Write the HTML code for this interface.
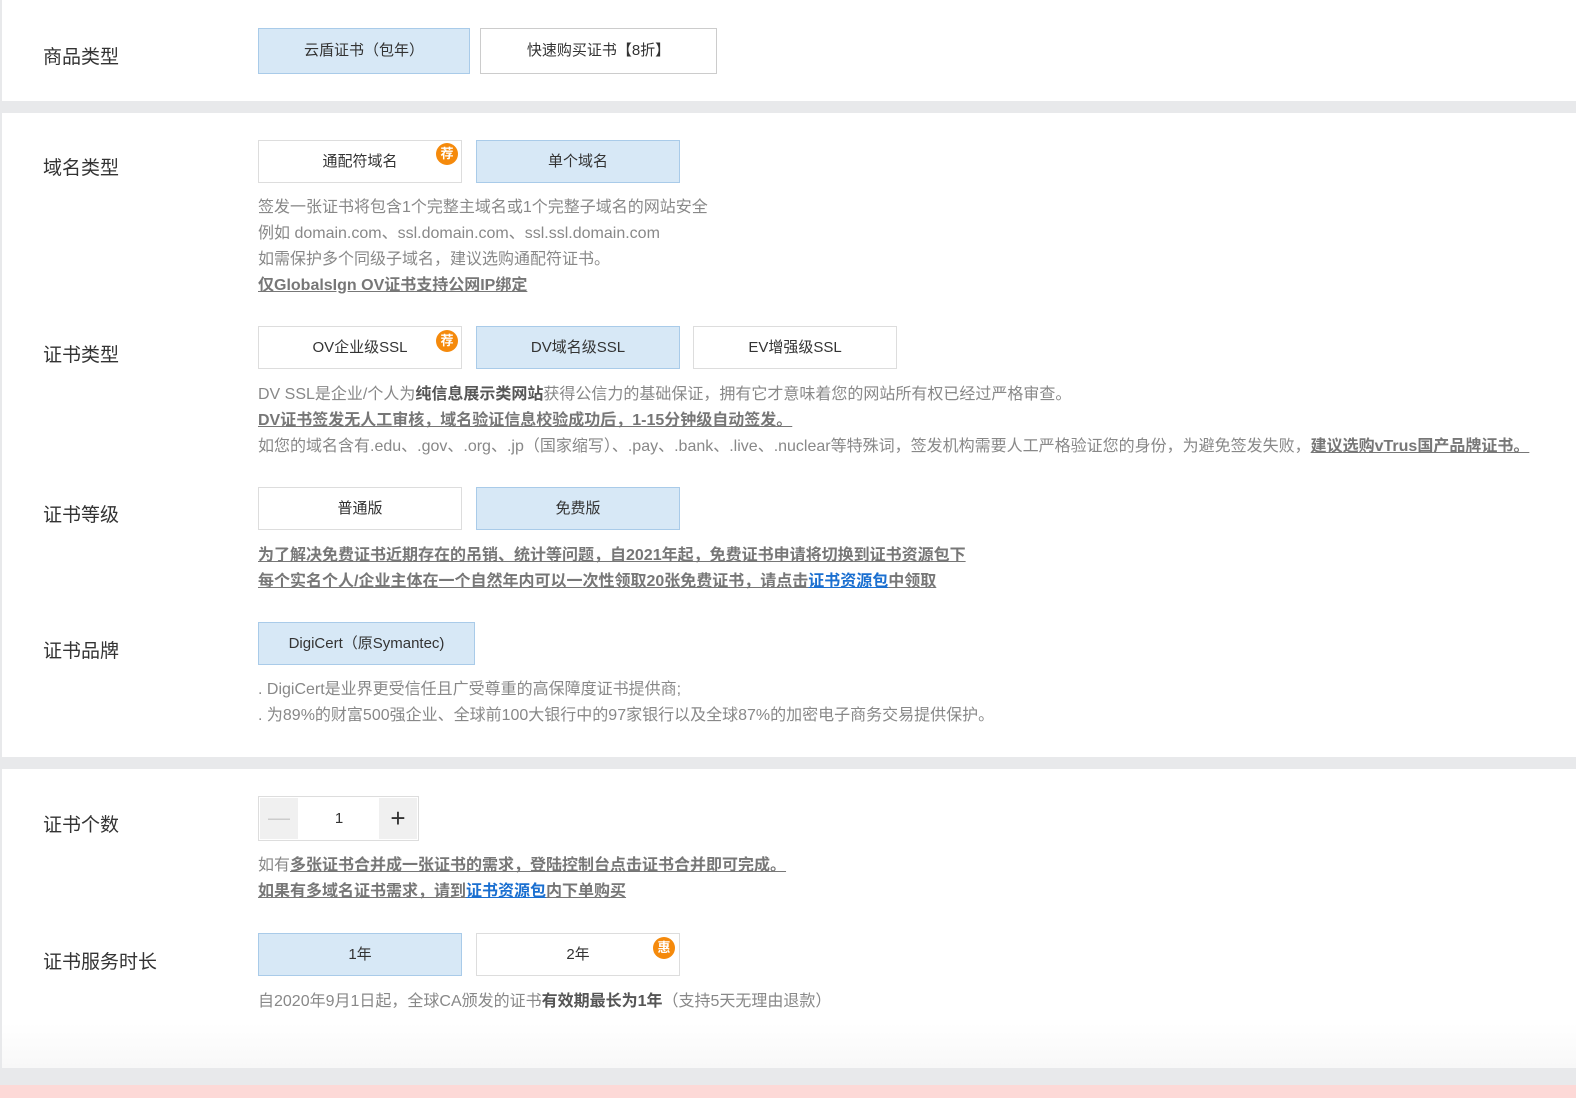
<!DOCTYPE html>
<html><head><meta charset="utf-8"><style>
*{margin:0;padding:0;box-sizing:border-box}
body{width:1576px;height:1098px;background:#e8e9eb;font-family:"Liberation Sans","Noto Sans CJK SC",sans-serif;position:relative;overflow:hidden}
.p{position:absolute;left:2px;right:0;background:#fff}
.lb{position:absolute;left:43px;font-size:19px;color:#333}
.b{position:absolute;height:43px;border:1px solid #ddd;background:#fff;font-size:15px;color:#333;text-align:center;line-height:41px}
.s{background:#d7e8f6;border-color:#a9cbe9}
.t{position:absolute;left:258px;font-size:16px;color:#888;line-height:26px;white-space:nowrap}
.u{text-decoration:underline;font-weight:bold;color:#777}
.k{font-weight:bold;color:#555}
a{color:#1a6fd0;text-decoration:underline}
.bd{position:absolute;width:22px;height:22px;border-radius:50%;background:#f58a0c;color:#fff;font-size:13px;line-height:22px;text-align:center;font-weight:bold}
</style></head><body>
<div class="p" style="top:0;height:101px"></div>
<div class="p" style="top:113px;height:644px"></div>
<div class="p" style="top:769px;height:299px;background:linear-gradient(#fff 85%,#f8f8f8)"></div>
<div style="position:absolute;left:0;right:0;top:1085px;height:13px;background:#fdd9d7"></div>

<div class="lb" style="top:42px">商品类型</div>
<div class="b s" style="left:258px;top:28px;width:212px;height:46px;line-height:44px">云盾证书（包年）</div>
<div class="b" style="left:480px;top:28px;width:237px;height:46px;line-height:44px;border-color:#ccc">快速购买证书【8折】</div>

<div class="lb" style="top:153px">域名类型</div>
<div class="b" style="left:258px;top:140px;width:204px">通配符域名</div>
<div class="bd" style="left:436px;top:143px">荐</div>
<div class="b s" style="left:476px;top:140px;width:204px">单个域名</div>
<div class="t" style="top:195px">签发一张证书将包含1个完整主域名或1个完整子域名的网站安全<br>例如 domain.com、ssl.domain.com、ssl.ssl.domain.com<br>如需保护多个同级子域名，建议选购通配符证书。<br><span class="u">仅GlobalsIgn OV证书支持公网IP绑定</span></div>

<div class="lb" style="top:340px">证书类型</div>
<div class="b" style="left:258px;top:326px;width:204px">OV企业级SSL</div>
<div class="bd" style="left:436px;top:330px">荐</div>
<div class="b s" style="left:476px;top:326px;width:204px">DV域名级SSL</div>
<div class="b" style="left:693px;top:326px;width:204px">EV增强级SSL</div>
<div class="t" style="top:382px">DV SSL是企业/个人为<span class="k">纯信息展示类网站</span>获得公信力的基础保证，拥有它才意味着您的网站所有权已经过严格审查。<br><span class="u">DV证书签发无人工审核，域名验证信息校验成功后，1-15分钟级自动签发。</span><br>如您的域名含有.edu、.gov、.org、.jp（国家缩写）、.pay、.bank、.live、.nuclear等特殊词，签发机构需要人工严格验证您的身份，为避免签发失败，<span class="u">建议选购vTrus国产品牌证书。</span></div>

<div class="lb" style="top:500px">证书等级</div>
<div class="b" style="left:258px;top:487px;width:204px">普通版</div>
<div class="b s" style="left:476px;top:487px;width:204px">免费版</div>
<div class="t" style="top:543px"><span class="u">为了解决免费证书近期存在的吊销、统计等问题，自2021年起，免费证书申请将切换到证书资源包下</span><br><span class="u">每个实名个人/企业主体在一个自然年内可以一次性领取20张免费证书，请点击<a>证书资源包</a>中领取</span></div>

<div class="lb" style="top:636px">证书品牌</div>
<div class="b s" style="left:258px;top:622px;width:217px">DigiCert（原Symantec)</div>
<div class="t" style="top:677px">. DigiCert是业界更受信任且广受尊重的高保障度证书提供商;<br>. 为89%的财富500强企业、全球前100大银行中的97家银行以及全球87%的加密电子商务交易提供保护。</div>

<div class="lb" style="top:810px">证书个数</div>
<div style="position:absolute;left:258px;top:796px;width:161px;height:45px;border:1px solid #ddd;background:#fff">
<div style="position:absolute;left:1px;top:1px;width:38px;height:41px;background:#f0f0f0;color:#ccc;font-size:22px;text-align:center;line-height:40px">—</div>
<div style="position:absolute;left:40px;top:0;width:80px;text-align:center;line-height:43px;font-size:15px;color:#333">1</div>
<div style="position:absolute;right:1px;top:1px;width:38px;height:41px;background:#f0f0f0;color:#333;font-size:26px;text-align:center;line-height:40px">+</div>
</div>
<div class="t" style="top:853px">如有<span class="u">多张证书合并成一张证书的需求，登陆控制台点击证书合并即可完成。</span><br><span class="u">如果有多域名证书需求，请到<a>证书资源包</a>内下单购买</span></div>

<div class="lb" style="top:947px">证书服务时长</div>
<div class="b s" style="left:258px;top:933px;width:204px">1年</div>
<div class="b" style="left:476px;top:933px;width:204px">2年</div>
<div class="bd" style="left:653px;top:937px">惠</div>
<div class="t" style="top:989px">自2020年9月1日起，全球CA颁发的证书<span class="k">有效期最长为1年</span>（支持5天无理由退款）</div>
</body></html>
